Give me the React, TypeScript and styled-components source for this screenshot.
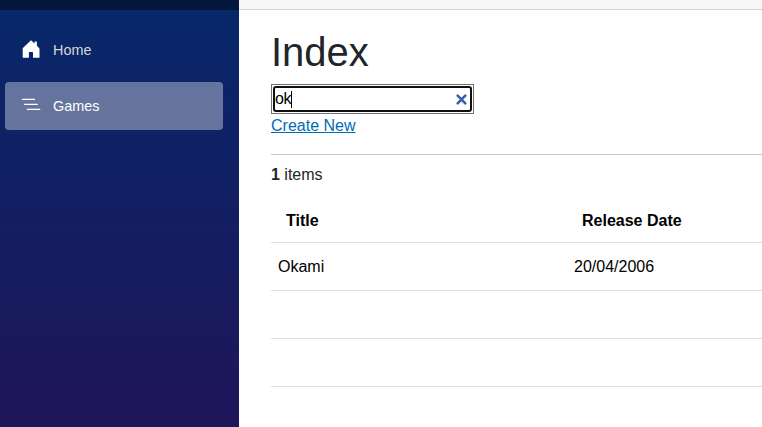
import React from "react";
import styled, { createGlobalStyle } from "styled-components";

const GlobalStyle = createGlobalStyle`
  * { box-sizing: border-box; }
  html, body { margin: 0; padding: 0; overflow: hidden; background: #fff; }
  body { font-family: "Liberation Sans", Arial, sans-serif; font-size: 16px; line-height: 24px; color: #212529; }
`;

const Page = styled.div`
  display: flex;
  height: 427px;
  width: 762px;
  overflow: hidden;
`;

const Sidebar = styled.aside`
  flex: 0 0 239px;
  background: linear-gradient(180deg, #07286a 0, #1f1559 427px);
`;

const Brand = styled.div`
  height: 10px;
  background: #03163b;
`;

const Nav = styled.nav`
  display: flex;
  flex-direction: column;
  gap: 8px;
  padding: 16px 16px 0 5px;
`;

const NavLink = styled.a<{ $active?: boolean }>`
  display: flex;
  align-items: center;
  gap: 12px;
  height: 48px;
  padding-left: 16px;
  border-radius: 4px;
  font-size: 14.4px;
  line-height: 48px;
  text-decoration: none;
  color: ${(p) => (p.$active ? "#fff" : "#d7d7d7")};
  background: ${(p) => (p.$active ? "rgba(255,255,255,0.37)" : "transparent")};
`;

const NavIcon = styled.svg`
  width: 20px;
  height: 20px;
  display: block;
  margin-top: -2px;
`;

const Main = styled.main`
  flex: 1;
  min-width: 0;
`;

const TopRow = styled.div`
  height: 10px;
  background: #f7f7f7;
  border-bottom: 1px solid #d6d5d5;
`;

const Content = styled.article`
  padding: 18px 0 0 32px;
`;

const Heading = styled.h1`
  margin: 0;
  height: 56px;
  font-size: 40px;
  line-height: 48px;
  font-weight: 400;
`;

const SearchBox = styled.div`
  display: flex;
  width: 203px;
  height: 30px;
  padding: 1px;
  border: 1px solid #707070;
`;

const SearchField = styled.div`
  flex: 1;
  display: flex;
  align-items: center;
  border: 2px solid #101010;
  border-radius: 3px;
  color: #000;
  line-height: 22px;
  padding-right: 3px;
`;

const Query = styled.span`
  letter-spacing: -0.4px;
`;

const Caret = styled.span`
  width: 1px;
  height: 17px;
  background: #000;
`;

const ClearIcon = styled.svg`
  width: 11px;
  height: 11px;
  margin: 1px 0 0 auto;
`;

const CreateLink = styled.a`
  display: block;
  width: max-content;
  height: 24px;
  color: #006bb7;
  text-decoration: underline;
`;

const Summary = styled.div`
  margin-top: 16px;
  border-top: 1px solid #c8c8ca;
  padding-top: 8px;
  height: 45px;
`;

const Grid = styled.table`
  width: 592px;
  table-layout: fixed;
  border-collapse: separate;
  border-spacing: 0;
  color: #000;
`;

const HeaderCell = styled.th`
  height: 44px;
  padding: 0 0 0 15px;
  text-align: left;
  font-weight: 700;
  border-bottom: 1px solid #dedfe3;
`;

const Cell = styled.td`
  height: 48px;
  padding: 0 7px;
  border-bottom: 1px solid #dedfe3;
`;

const games = [{ title: "Okami", released: "20/04/2006" }];
const emptyRows = [0, 1];

export default function App() {
  return (
    <>
      <GlobalStyle />
      <Page>
        <Sidebar>
          <Brand />
          <Nav>
            <NavLink>
              <NavIcon viewBox="0 0 20 20" fill="#fff">
                <path d="M10 1.2 13.6 4.6V2.6h2.3v4.2L18.5 9.6V18.7H12V13.6q0-.7-.7-.7H8.6q-.7 0-.7.7v5.1H1.7V9.2Z" />
              </NavIcon>
              Home
            </NavLink>
            <NavLink $active>
              <NavIcon viewBox="0 0 20 20" fill="none" stroke="#fff" strokeWidth="1.3" strokeLinecap="round">
                <path d="M1.5 4.4h12M3.7 9.4h12.5M6.4 14.4h12.3" />
              </NavIcon>
              Games
            </NavLink>
          </Nav>
        </Sidebar>
        <Main>
          <TopRow />
          <Content>
            <Heading>Index</Heading>
            <SearchBox>
              <SearchField>
                <Query>ok</Query>
                <Caret />
                <ClearIcon viewBox="0 0 11 11" fill="none" stroke="#355fac" strokeWidth="2.5" strokeLinecap="round">
                  <path d="m1.7 1.7 7.6 7.6M9.3 1.7 1.7 9.3" />
                </ClearIcon>
              </SearchField>
            </SearchBox>
            <CreateLink>Create New</CreateLink>
            <Summary>
              <b>1</b> items
            </Summary>
            <Grid>
              <thead>
                <tr>
                  <HeaderCell>Title</HeaderCell>
                  <HeaderCell>Release Date</HeaderCell>
                </tr>
              </thead>
              <tbody>
                {games.map((game) => (
                  <tr key={game.title}>
                    <Cell>{game.title}</Cell>
                    <Cell>{game.released}</Cell>
                  </tr>
                ))}
                {emptyRows.map((row) => (
                  <tr key={row}>
                    <Cell />
                    <Cell />
                  </tr>
                ))}
              </tbody>
            </Grid>
          </Content>
        </Main>
      </Page>
    </>
  );
}
